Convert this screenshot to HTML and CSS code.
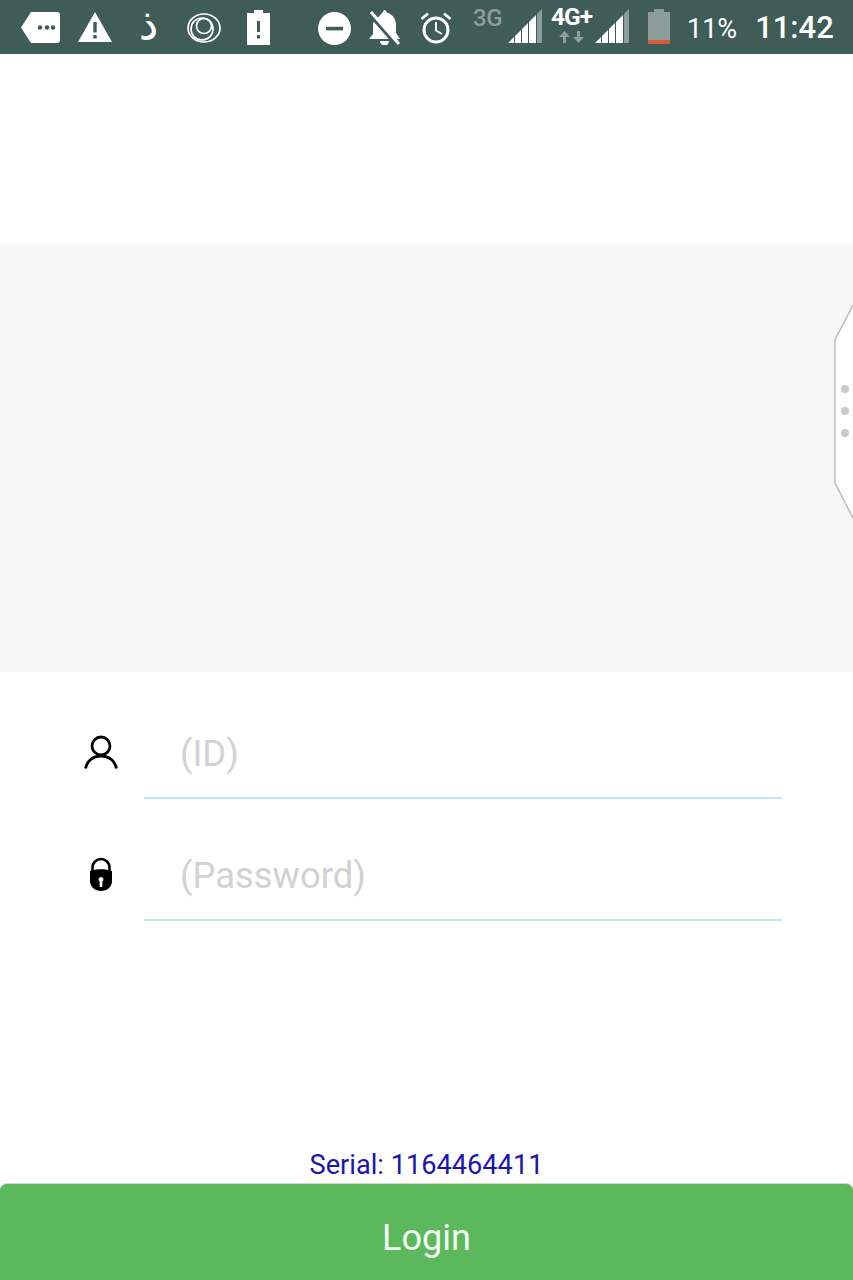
FILE: index.html
```html
<!DOCTYPE html>
<html lang="en">
  <head>
    <meta charset="UTF-8" />
    <meta name="viewport" content="width=device-width, initial-scale=1.0" />
    <title>Login</title>
    <link rel="stylesheet" href="styles.css">
  </head>
  <body>
    <div class="status-bar">
      <svg class="ic-tag" width="39" height="31" viewBox="0 0 39 31">
        <path fill="#fff" d="M10 0H36a3 3 0 0 1 3 3V28a3 3 0 0 1-3 3H10L0 15.5Z" />
        <circle class="cut" cx="19" cy="15.5" r="2.2" />
        <circle class="cut" cx="26" cy="15.5" r="2.2" />
        <circle class="cut" cx="32" cy="15.5" r="2.2" />
      </svg>
      <svg class="ic-warn" width="34" height="30" viewBox="0 0 34 30">
        <path fill="#fff" d="M17 0L34 30H0Z" />
        <rect class="cut" x="15.3" y="10" width="3.4" height="10.5" />
        <rect class="cut" x="15.3" y="23" width="3.4" height="3.5" />
      </svg>
      <span class="ic-letter">ذ</span>
      <svg class="ic-rings" width="34" height="30" viewBox="0 0 34 30" fill="none" stroke="#fff" stroke-width="1.700">
        <ellipse cx="17" cy="15" rx="16" ry="14" />
        <circle cx="15" cy="16" r="11" />
        <circle cx="17" cy="13" r="7.500" />
      </svg>
      <svg class="ic-batt-alert" width="23" height="35" viewBox="0 0 23 35">
        <path fill="#fff" d="M7 0H16V3H23V35H0V3H7Z" />
        <rect class="cut" x="10" y="11" width="3" height="11" />
        <rect class="cut" x="10" y="25" width="3" height="3.5" />
      </svg>
      <svg class="ic-dnd" width="33" height="33" viewBox="0 0 33 33">
        <circle fill="#fff" cx="16.5" cy="16.5" r="16.5" />
        <rect class="cut" x="8" y="14.8" width="17" height="3.6" />
      </svg>
      <svg class="ic-bell" width="31" height="35" viewBox="0 0 31 35">
        <path fill="#fff" d="M15 0a2.500 2.500 0 0 1 2.500 2.500C23.500 4 27 9 27 15V23L31 29H0L4 24V13L14 2Z" />
        <path fill="#fff" d="M11 31H20A4.500 4.500 0 0 1 11 31Z" />
        <path class="slash-cut" d="M0 4L27 35" />
        <path class="slash" d="M2 2L30 34" />
      </svg>
      <svg class="ic-alarm" width="32" height="32" viewBox="0 0 32 32" fill="none" stroke="#fff">
        <circle cx="16" cy="18" r="12" stroke-width="3" />
        <path d="M16 10V18.500L22 22" stroke-width="2" />
        <path d="M1.500 7L8 1.500M30.500 7L24 1.500" stroke-width="2.800" />
      </svg>
      <span class="net-3g">3G</span>
      <svg class="ic-signal sig-a" width="34" height="34" viewBox="0 0 34 34">
        <path fill="#fff" d="M0 34L6 28V34ZM7 34V27L13 21V34ZM14 34V20L20 14V34ZM21 34V13L28 6V34Z" />
        <path fill="#8d9d99" d="M29 34V5L34 0V34Z" />
      </svg>
      <div class="net-4g">
        <span class="net-4g-label">4G+</span>
        <svg width="25" height="12" viewBox="0 0 25 12" fill="#8d9d99">
          <path d="M5.500 0L11 6H7V12H4V6H0Z" />
          <path d="M19.500 12L14 6H18V0H21V6H25Z" />
        </svg>
      </div>
      <svg class="ic-signal sig-b" width="34" height="34" viewBox="0 0 34 34">
        <path fill="#fff" d="M0 34L6 28V34ZM7 34V27L13 21V34ZM14 34V20L20 14V34ZM21 34V13L28 6V34Z" />
        <path fill="#8d9d99" d="M29 34V5L34 0V34Z" />
      </svg>
      <svg class="ic-batt" width="22" height="35" viewBox="0 0 22 35">
        <path fill="#8d9d99" d="M6 0H16V3H22V31H0V3H6Z" />
        <rect fill="#d9593a" y="31" width="22" height="4" />
      </svg>
      <span class="batt-pct">11%</span>
      <span class="clock">11:42</span>
    </div>

    <div class="top-space"></div>

    <div class="banner">
      <svg class="side-handle" width="20" height="214" viewBox="0 0 20 214">
        <path d="M20 0L2 35V178L20 213V0Z" fill="#fff" stroke="none" />
        <path d="M20 0L2 35V178L20 213" fill="none" stroke="#bdbdbd" stroke-width="1.500" />
        <circle cx="12" cy="84" r="4" fill="#c9c9c9" />
        <circle cx="12" cy="106" r="4" fill="#c9c9c9" />
        <circle cx="12" cy="128" r="4" fill="#c9c9c9" />
      </svg>
    </div>

    <form class="login-form">
      <div class="field">
        <span class="field-icon">
          <svg width="34" height="34" viewBox="0 0 34 34" fill="none" stroke="#000" stroke-width="2.800">
            <circle cx="17" cy="11" r="9" />
            <path d="M1.500 33.500C3 26 9 21 17 21S31 26 32.500 33.500" />
          </svg>
        </span>
        <input type="text" placeholder="(ID)" />
      </div>
      <div class="field">
        <span class="field-icon">
          <svg width="22" height="34" viewBox="0 0 22 34">
            <path d="M2.500 15V10.500a8.500 8.500 0 0 1 17 0V15" fill="none" stroke="#000" stroke-width="2.600" />
            <path d="M0 14C6 11.500 16 11.500 22 14V24C22 30 17 34 11 34S0 30 0 24Z" fill="#000" />
            <path d="M11 20a2.500 2.500 0 0 1 1.300 4.600V30H9.700V24.600A2.500 2.500 0 0 1 11 20Z" fill="#fff" />
          </svg>
        </span>
        <input type="password" placeholder="(Password)" />
      </div>
    </form>

    <p class="serial">Serial: 1164464411</p>
    <button class="login-btn" type="button">Login</button>
  </body>
</html>
```

FILE: styles.css
```css
*,
*::before,
*::after {
  box-sizing: border-box;
}

:root {
  --status-bg: #405c56;
  --dim: #8d9d99;
}

body {
  margin: 0;
  height: 100vh;
  display: flex;
  flex-direction: column;
  overflow: hidden;
  background: #fff;
  font-family: Roboto, "Liberation Sans", sans-serif;
}

/* status bar */
.status-bar {
  display: flex;
  align-items: flex-start;
  flex: 0 0 54px;
  padding-left: 21px;
  background: var(--status-bg);
  color: #fff;
}

.status-bar svg,
.status-bar span,
.net-4g {
  flex: none;
}

.cut {
  fill: var(--status-bg);
}

.slash {
  stroke: #fff;
  stroke-width: 3;
}

.slash-cut {
  stroke: var(--status-bg);
  stroke-width: 3;
}

.ic-tag { margin-top: 12px; }
.ic-warn { margin: 12px 0 0 18px; }

.ic-letter {
  width: 25px;
  margin: 0 0 0 24px;
  font-family: "DejaVu Sans", sans-serif;
  font-size: 44px;
  line-height: 50px;
  text-align: center;
}

.ic-rings { margin: 13px 0 0 26px; }
.ic-batt-alert { margin: 10px 0 0 26px; }
.ic-dnd { margin: 12px 0 0 48px; }
.ic-bell { margin: 10px 0 0 18px; }
.ic-alarm { margin: 12px 0 0 20px; }

.net-3g {
  width: 28px;
  margin: 4px 0 0 21px;
  font-size: 24px;
  font-weight: 500;
  line-height: 28px;
  letter-spacing: -0.5px;
  color: var(--dim);
  white-space: nowrap;
}

.ic-signal { margin-top: 9px; }
.sig-a { margin-left: 7px; }

.net-4g {
  display: flex;
  flex-direction: column;
  align-items: center;
  width: 41px;
  margin: 3px 0 0 9px;
}

.net-4g-label {
  font-size: 24.5px;
  font-weight: 700;
  line-height: 28px;
  letter-spacing: -1px;
  white-space: nowrap;
}

.sig-b { margin-left: 3px; }
.ic-batt { margin: 9px 0 0 19px; }

.batt-pct {
  margin: 11px 0 0 17px;
  font-size: 27px;
  line-height: 36px;
}

.clock {
  margin: 10px 0 0 18px;
  font-size: 31px;
  font-weight: 500;
  line-height: 36px;
}

/* top area */
.top-space {
  flex: 0 0 190px;
}

.banner {
  position: relative;
  flex: 0 0 428px;
  background: #f6f6f6;
}

.side-handle {
  position: absolute;
  top: 61px;
  right: 0;
}

/* form */
.login-form {
  flex: 1;
  display: flex;
  flex-direction: column;
  gap: 44px;
  padding: 49px 71px 0 84px;
}

.field {
  display: flex;
  height: 78px;
}

.field-icon {
  display: flex;
  justify-content: center;
  flex: 0 0 34px;
  margin: 14px 26px 0 0;
}

.field input {
  flex: 1;
  min-width: 0;
  padding: 0 0 11px 36px;
  border: none;
  border-bottom: 2px solid #c4e4f5;
  outline: none;
  background: transparent;
  font-family: inherit;
  font-size: 36.4px;
}

.field input::placeholder {
  color: #d2d2d2;
  opacity: 1;
}

/* bottom */
.serial {
  margin: 0;
  font-size: 27.2px;
  line-height: 36px;
  text-align: center;
  color: #1a14b0;
}

.login-btn {
  flex: 0 0 97px;
  width: 100%;
  padding: 12px 0 0;
  border: none;
  border-top: 1px solid #d4d4d4;
  border-radius: 7px 7px 0 0;
  background-color: #5cb85c;
  color: #f4fbf2;
  font-family: inherit;
  font-size: 36px;
}
```
